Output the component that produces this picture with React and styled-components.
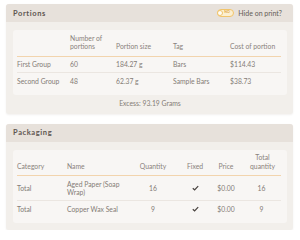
import React from "react";
import styled, { createGlobalStyle } from "styled-components";

const GlobalStyle = createGlobalStyle`
  body {
    margin: 0;
    background: #ffffff;
    font-family: Lato, "Open Sans", sans-serif;
  }
`;

const portionCols = [53, 46, 57, 57, 51];
const packagingCols = [50, 63, 48, 36, 26, 41];

const portions = [
  ["First Group", "60", "184.27 g", "Bars", "$114.43"],
  ["Second Group", "48", "62.37 g", "Sample Bars", "$38.73"],
];

const packaging = [
  ["Total", "Aged Paper (Soap Wrap)", "16", true, "$0.00", "16"],
  ["Total", "Copper Wax Seal", "9", true, "$0.00", "9"],
];

function Check() {
  return (
    <svg width="7" height="6" viewBox="0 0 7 6">
      <path d="M0.8 3.2 L2.6 4.9 L6.2 1.1" fill="none" stroke="#4a4440" strokeWidth="1.3" />
    </svg>
  );
}

function App() {
  return (
    <Page>
      <GlobalStyle />
      <Card>
        <CardHeader>
          <Title>Portions</Title>
          <PrintToggle>
            <Toggle>
              <Knob />
              <ToggleText>NO</ToggleText>
            </Toggle>
            <ToggleLabel>Hide on print?</ToggleLabel>
          </PrintToggle>
        </CardHeader>
        <CardBody>
          <Box>
            <Table>
              <colgroup>
                {portionCols.map((w, i) => (
                  <col key={i} style={{ width: w }} />
                ))}
              </colgroup>
              <thead>
                <tr>
                  <Th></Th>
                  <Th>Number of<br />portions</Th>
                  <Th>Portion size</Th>
                  <Th>Tag</Th>
                  <Th>Cost of portion</Th>
                </tr>
              </thead>
              <tbody>
                {portions.map((row, i) => (
                  <Row key={i}>
                    {row.map((c, j) => (
                      <Td key={j}>{c}</Td>
                    ))}
                  </Row>
                ))}
              </tbody>
            </Table>
          </Box>
          <Excess>Excess: 93.19 Grams</Excess>
        </CardBody>
      </Card>

      <Card>
        <CardHeader>
          <Title>Packaging</Title>
        </CardHeader>
        <CardBody $tight>
          <Box>
            <Table>
              <colgroup>
                {packagingCols.map((w, i) => (
                  <col key={i} style={{ width: w }} />
                ))}
              </colgroup>
              <thead>
                <tr>
                  <Th>Category</Th>
                  <Th>Name</Th>
                  <Th $center>Quantity</Th>
                  <Th $center>Fixed</Th>
                  <Th $center>Price</Th>
                  <Th $center $shift>Total<br />quantity</Th>
                </tr>
              </thead>
              <tbody>
                {packaging.map((row, i) => (
                  <Row key={i}>
                    <Td>{row[0]}</Td>
                    <Td $wrap>{row[1]}</Td>
                    <Td $center>{row[2]}</Td>
                    <Td $center>{row[3] && <Check />}</Td>
                    <Td $center>{row[4]}</Td>
                    <Td $center $shift>{row[5]}</Td>
                  </Row>
                ))}
              </tbody>
            </Table>
          </Box>
        </CardBody>
      </Card>
    </Page>
  );
}

export default App;

const Page = styled.div`
  display: flex;
  flex-direction: column;
  gap: 10px;
  padding: 4px 0 0 6px;
  width: 287px;
`;

const Card = styled.div`
  background: #f2efeb;
  border-radius: 3px;
  box-shadow: 0 1px 2px rgba(90, 70, 50, 0.08);
  overflow: hidden;
`;

const CardHeader = styled.div`
  height: 18px;
  background: #e7e1db;
  display: flex;
  align-items: center;
  justify-content: space-between;
  padding: 0 11px 0 7px;
`;

const Title = styled.div`
  font-size: 7.5px;
  font-weight: 700;
  letter-spacing: 0.6px;
  color: #5e5650;
`;

const PrintToggle = styled.div`
  display: flex;
  align-items: center;
  gap: 4px;
`;

const Toggle = styled.div`
  width: 17px;
  height: 8px;
  box-sizing: border-box;
  border: 1px solid #f1c46b;
  background: #fcefd0;
  border-radius: 4px;
  display: flex;
  align-items: center;
  gap: 1px;
`;

const Knob = styled.div`
  width: 6px;
  height: 6px;
  box-sizing: border-box;
  border-radius: 50%;
  background: #fffdf8;
  border: 1px solid #f1c46b;
  margin-left: -1px;
`;

const ToggleText = styled.span`
  font-size: 3.5px;
  font-weight: 700;
  color: #e0a640;
  line-height: 1;
`;

const ToggleLabel = styled.span`
  font-size: 7px;
  color: #645c56;
`;

const CardBody = styled.div`
  padding: 8px 6px ${(p) => (p.$tight ? "7px" : "6px")} 7px;
`;

const Box = styled.div`
  background: #f8f6f4;
  border-radius: 3px;
  padding: 0 6px 6px 4px;
`;

const Table = styled.table`
  width: 100%;
  table-layout: fixed;
  border-collapse: collapse;
  font-size: 6.8px;
  color: #847c76;
`;

const Th = styled.th`
  font-weight: 400;
  text-align: ${(p) => (p.$center ? "center" : "left")};
  vertical-align: bottom;
  line-height: 8.5px;
  padding: 0 ${(p) => (p.$shift ? "0" : "2px")} 5px ${(p) => (p.$shift ? "4px" : "0")};
  height: 26px;
  box-sizing: border-box;
  border-bottom: 1px solid #f2d4ad;
  color: #8a827c;
`;

const Row = styled.tr`
  & + & td {
    border-top: 1px solid #ebe6e1;
  }
`;

const Td = styled.td`
  text-align: ${(p) => (p.$center ? "center" : "left")};
  vertical-align: middle;
  line-height: 8.5px;
  padding: 3.5px ${(p) => (p.$wrap ? "6px" : "2px")} 3.5px ${(p) => (p.$shift ? "4px" : "0")};
  height: 16px;
  box-sizing: border-box;
  white-space: ${(p) => (p.$wrap ? "normal" : "nowrap")};
`;

const Excess = styled.div`
  text-align: center;
  font-size: 6.8px;
  line-height: 9px;
  color: #847c76;
  margin-top: 4px;
`;
